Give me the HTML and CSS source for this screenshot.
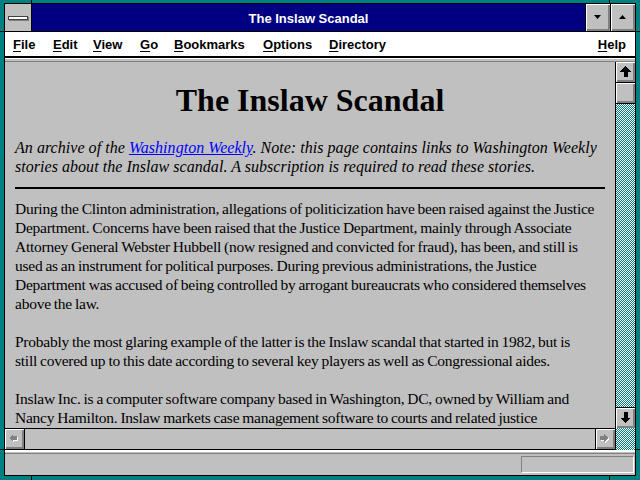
FILE: index.html
```
<!DOCTYPE html>
<html>
<head>
<meta charset="utf-8">
<title>The Inslaw Scandal</title>
<link rel="stylesheet" href="styles.css">
</head>
<body>
<div class="screen">
  <div class="window">
    <div class="titlebar">
      <div class="sysmenu"><span class="sysbar"></span></div>
      <div class="title">The Inslaw Scandal</div>
      <div class="tbtn"><svg width="7" height="4" viewBox="0 0 7 4"><polygon points="0,0 7,0 3.5,4" fill="#000"/></svg></div>
      <div class="tbtn"><svg width="7" height="4" viewBox="0 0 7 4"><polygon points="0,4 7,4 3.5,0" fill="#000"/></svg></div>
    </div>
    <div class="menubar">
      <span class="mi"><u>F</u>ile</span>
      <span class="mi"><u>E</u>dit</span>
      <span class="mi"><u>V</u>iew</span>
      <span class="mi"><u>G</u>o</span>
      <span class="mi"><u>B</u>ookmarks</span>
      <span class="mi"><u>O</u>ptions</span>
      <span class="mi"><u>D</u>irectory</span>
      <span class="mi mi-help"><u>H</u>elp</span>
    </div>
    <div class="sep-top"></div>
    <div class="main">
      <div class="viewcol">
        <div class="content">
          <h1 class="heading">The Inslaw Scandal</h1>
          <p class="intro">An archive of the <a href="#" class="link">Washington Weekly</a>. Note: this page contains links to Washington Weekly<br>stories about the Inslaw scandal. A subscription is required to read these stories.</p>
          <hr class="rule">
          <p class="para">During the Clinton administration, allegations of politicization have been raised against the Justice<br>Department. Concerns have been raised that the Justice Department, mainly through Associate<br>Attorney General Webster Hubbell (now resigned and convicted for fraud), has been, and still is<br>used as an instrument for political purposes. During previous administrations, the Justice<br>Department was accused of being controlled by arrogant bureaucrats who considered themselves<br>above the law.</p>
          <p class="para">Probably the most glaring example of the latter is the Inslaw scandal that started in 1982, but is<br>still covered up to this date according to several key players as well as Congressional aides.</p>
          <p class="para">Inslaw Inc. is a computer software company based in Washington, DC, owned by William and<br>Nancy Hamilton. Inslaw markets case management software to courts and related justice</p>
        </div>
        <div class="hscroll">
          <div class="sbtn hbtn hbtn-left">
            <svg width="10" height="10" viewBox="0 0 10 10" shape-rendering="crispEdges"><polygon points="1,5 5,1 5,3 9,3 9,7 5,7 5,9" fill="#fff"/><polygon points="0,4 4,0 4,2 8,2 8,6 4,6 4,8" fill="#808080"/></svg>
          </div>
          <div class="htrack"></div>
          <div class="sbtn hbtn hbtn-right">
            <svg width="10" height="10" viewBox="0 0 10 10" shape-rendering="crispEdges"><polygon points="9,5 5,1 5,3 1,3 1,7 5,7 5,9" fill="#fff"/><polygon points="8,4 4,0 4,2 0,2 0,6 4,6 4,8" fill="#808080"/></svg>
          </div>
        </div>
      </div>
      <div class="vscroll">
        <div class="sbtn vbtn vbtn-up">
          <svg width="11" height="11" viewBox="0 0 11 11" shape-rendering="crispEdges"><polygon points="5.5,0 11,5.5 7.5,5.5 7.5,11 3.5,11 3.5,5.5 0,5.5" fill="#000"/></svg>
        </div>
        <div class="sbtn thumb"></div>
        <div class="vtrack checker"></div>
        <div class="sbtn vbtn vbtn-down">
          <svg width="11" height="11" viewBox="0 0 11 11" shape-rendering="crispEdges"><polygon points="5.5,11 11,5.5 7.5,5.5 7.5,0 3.5,0 3.5,5.5 0,5.5" fill="#000"/></svg>
        </div>
        <div class="corner checker"></div>
      </div>
    </div>
    <div class="sep-bottom"></div>
    <div class="statusbar"><div class="statusbox"></div></div>
  </div>
  <span class="notch notch-v notch-tl"></span>
  <span class="notch notch-v notch-tr"></span>
  <span class="notch notch-v notch-bl"></span>
  <span class="notch notch-v notch-br"></span>
  <span class="notch notch-h notch-lt"></span>
  <span class="notch notch-h notch-lb"></span>
  <span class="notch notch-h notch-rt"></span>
  <span class="notch notch-h notch-rb"></span>
</div>
</body>
</html>
```
FILE: styles.css
```
html, body {
  margin: 0;
  padding: 0;
}
body {
  width: 640px;
  height: 480px;
  overflow: hidden;
  background: #008080;
}
.screen {
  position: relative;
  width: 640px;
  height: 480px;
  box-sizing: border-box;
  padding: 3px 4px 4px 4px;
  background: #008080;
}
.window {
  height: 100%;
  box-sizing: border-box;
  border: 1px solid #000;
  background: #c0c0c0;
  display: flex;
  flex-direction: column;
}

/* title bar */
.titlebar {
  height: 27px;
  flex: none;
  border-bottom: 1px solid #000;
  background: #000080;
  display: flex;
}
.sysmenu {
  width: 26px;
  border-right: 1px solid #000;
  background: #c0c0c0;
  display: flex;
  align-items: center;
  justify-content: center;
}
.sysbar {
  display: block;
  width: 18px;
  height: 2px;
  background: #fff;
  border: 1px solid #404040;
  box-shadow: 1px 1px 0 #808080;
  margin: 1px 1px 0 0;
}
.title {
  flex: 1;
  box-sizing: border-box;
  padding-top: 1px;
  text-align: center;
  color: #fff;
  font: bold 13px/27px "Liberation Sans", Arial, sans-serif;
}
.tbtn {
  width: 24px;
  border-left: 1px solid #000;
  background: #c0c0c0;
  display: flex;
  align-items: center;
  justify-content: center;
  box-shadow: inset 1px 1px #fff, inset -1px -1px #808080, inset -2px -2px #808080;
}
.tbtn svg {
  display: block;
  margin: 0 1px 1px 0;
}

/* menu bar */
.menubar {
  height: 26px;
  flex: none;
  box-sizing: border-box;
  padding: 1px 8px 0 8px;
  border-bottom: 2px solid #000;
  background: #fff;
  display: grid;
  grid-template-columns: 40px 40px 47px 34px 89px 66px auto 1fr;
  font: bold 13px/24px "Liberation Sans", Arial, sans-serif;
  color: #000;
}
.mi {
  white-space: nowrap;
}
.mi u {
  text-underline-offset: 2px;
}
.mi-help {
  justify-self: end;
  padding-right: 1px;
}

.sep-top {
  height: 4px;
  flex: none;
  box-sizing: border-box;
  border-top: 1px solid #fff;
  border-bottom: 1px solid #808080;
  background: #c0c0c0;
}

/* main area */
.main {
  height: 388px;
  flex: none;
  display: flex;
}
.viewcol {
  flex: 1;
  display: flex;
  flex-direction: column;
  min-width: 0;
}
.content {
  flex: 1;
  overflow: hidden;
  padding: 0 10px;
  font-family: "Liberation Serif", "Times New Roman", serif;
  font-size: 16px;
  line-height: 19px;
  color: #000;
  white-space: nowrap;
}
.heading {
  margin: 20px 0 20px;
  font-size: 32px;
  line-height: 36px;
  font-weight: bold;
  text-align: center;
}
.intro {
  margin: 0;
  font-style: italic;
  letter-spacing: 0.04px;
}
.link {
  color: #0000ff;
  text-decoration: underline;
}
.rule {
  margin: 11px 0 10px;
  height: 2px;
  border: 0;
  background: #000;
}
.para {
  margin: 0 0 19px;
  font-size: 15.5px;
  letter-spacing: -0.25px;
  word-spacing: -0.6px;
}

/* scrollbars */
.sbtn {
  background: #c0c0c0;
  box-shadow: inset 1px 1px #fff, inset -1px -1px #808080, inset -2px -2px #808080;
  display: flex;
  align-items: center;
  justify-content: center;
}
.hscroll {
  height: 20px;
  flex: none;
  border-top: 1px solid #000;
  border-bottom: 1px solid #000;
  display: flex;
  background: #c0c0c0;
}
.hbtn {
  width: 19px;
}
.hbtn-left {
  border-right: 1px solid #000;
}
.hbtn-right {
  border-left: 1px solid #000;
}
.hbtn svg {
  margin: 0 1px 1px 0;
}
.htrack {
  flex: 1;
}
.vscroll {
  width: 19px;
  flex: none;
  border-left: 1px solid #000;
  display: flex;
  flex-direction: column;
}
.vbtn {
  height: 20px;
  flex: none;
}
.vbtn svg {
  margin: 0 1px 1px 0;
}
.vbtn-up {
  border-bottom: 1px solid #000;
}
.vbtn-down {
  border-top: 1px solid #000;
}
.thumb {
  height: 20px;
  flex: none;
  border-bottom: 1px solid #000;
}
.vtrack {
  flex: 1;
}
.corner {
  height: 22px;
  flex: none;
}
.checker {
  background-color: #c0c0c0;
  background-image: repeating-conic-gradient(#008080 0 25%, #ffffff 0 50%);
  background-size: 2px 2px;
}

.sep-bottom {
  height: 4px;
  flex: none;
  box-sizing: border-box;
  border-top: 2px solid #fff;
  border-bottom: 1px solid #808080;
  background: #c0c0c0;
}

/* status bar */
.statusbar {
  flex: 1;
  box-sizing: border-box;
  padding: 2px 1px 0 0;
  display: flex;
  justify-content: flex-end;
  background: #c0c0c0;
}
.statusbox {
  width: 113px;
  height: 17px;
  box-sizing: border-box;
  border-top: 1px solid #808080;
  border-left: 1px solid #808080;
  border-right: 1px solid #fff;
  border-bottom: 1px solid #fff;
}

/* frame resize notches */
.notch {
  position: absolute;
  background: #000;
}
.notch-v {
  width: 1px;
}
.notch-h {
  height: 1px;
}
.notch-tl { left: 31px; top: 0; height: 3px; }
.notch-tr { left: 609px; top: 0; height: 3px; }
.notch-bl { left: 31px; bottom: 0; height: 4px; }
.notch-br { left: 609px; bottom: 0; height: 4px; }
.notch-lt { left: 0; top: 31px; width: 4px; }
.notch-lb { left: 0; top: 449px; width: 4px; }
.notch-rt { right: 0; top: 31px; width: 4px; }
.notch-rb { right: 0; top: 449px; width: 4px; }
```
